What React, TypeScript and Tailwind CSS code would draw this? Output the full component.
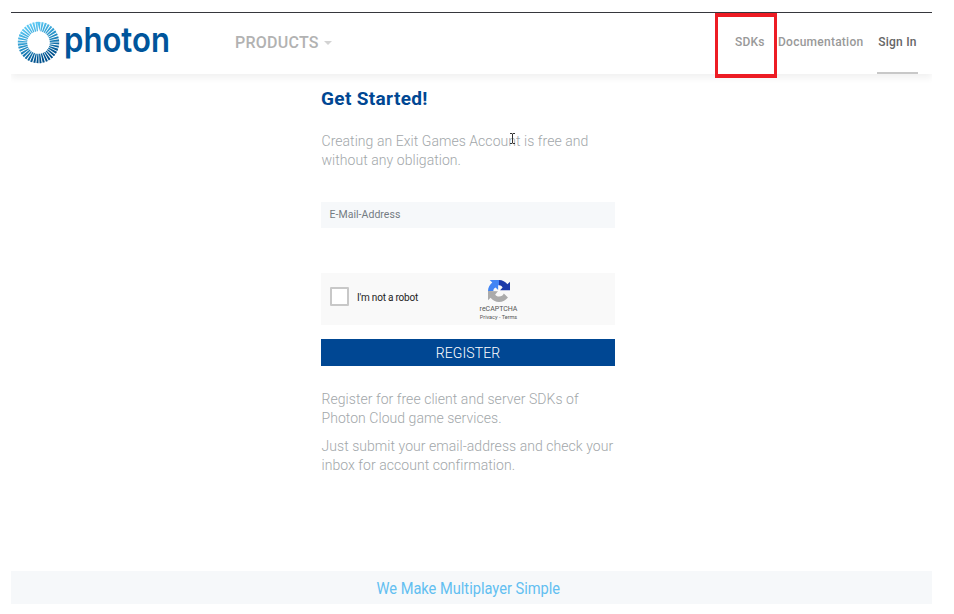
import React from 'react';

function PhotonLogo() {
  return (
    <svg width="156" height="58" viewBox="0 -8 156 58" className="block overflow-visible" aria-label="photon">
      <defs>
        <linearGradient id="ring" x1="0.2" y1="0" x2="0.65" y2="1">
          <stop offset="0" stopColor="#5cc8f3" />
          <stop offset="0.5" stopColor="#238fc6" />
          <stop offset="1" stopColor="#00508c" />
        </linearGradient>
      </defs>
      <circle cx="21.500" cy="21.500" r="16" fill="none" stroke="url(#ring)" strokeWidth="9.400" pathLength="400" strokeDasharray="6.6 3.4" />
      <text x="47" y="31.400" textLength="106" lengthAdjust="spacingAndGlyphs" fill="#00559b" fontSize="34" fontWeight="600" fontFamily="Inter, sans-serif">photon</text>
    </svg>
  );
}

function RecaptchaMark() {
  return (
    <svg width="22" height="22" viewBox="0 0 64 64" className="block">
      <path d="M64 32V5l-7.500 7.500C50.500 5 42 0 32 0v15.500c6 0 9 3 10.500 6.500L35 29.500h29z" fill="#1c3aa9" />
      <path d="M32 0H5l7.500 7.500C5 13.500 0 22 0 32h15.500c0-6 3-9 6.500-10.500l7.500 7.500V15.500H32z" fill="#4285f4" />
      <path d="M0 32v27l7.500-7.500C13.500 59 22 64 32 64c11 0 20-5 26-13l-12-12c-2 5-7 9-14 9-5 0-9-2-11-6l8-9z" fill="#ababab" />
    </svg>
  );
}

export default function App() {
  return (
    <div className="relative h-[614px] w-[954px] overflow-hidden bg-white pl-[11px] pt-3 font-['Roboto',sans-serif]">
      <div className="flex h-[592px] w-[921px] flex-col">
        <header className="flex h-[62px] shrink-0 border-t border-[#36373d] bg-white pl-[6px] pr-[14px] shadow-[0_4px_7px_rgba(0,0,0,0.06)] [clip-path:inset(0_0_-14px_0)]">
          <PhotonLogo />
          <div className="ml-[62px] flex h-[59px] items-center gap-[5px] text-base font-medium text-[#b2b2b2]">
            <span className="w-[84px] whitespace-nowrap tracking-[0.25px]">PRODUCTS</span>
            <span className="border-x-[4px] border-t-[4px] border-x-transparent border-t-[#d3d3d3]" />
          </div>
          <nav className="ml-auto flex text-[12px] font-medium leading-[58px] text-[#999]">
            <a className="mr-[13px] w-[30px] whitespace-nowrap tracking-[0.2px]">SDKs</a>
            <a className="mr-[14px] w-[85px] whitespace-nowrap tracking-[0.25px]">Documentation</a>
            <a className="h-[61px] w-[41px] whitespace-nowrap border-b-2 border-[#c8c8c8] text-center tracking-[0.2px] text-[#666]">Sign In</a>
          </nav>
        </header>

        <main className="ml-[310px] flex w-[294px] flex-col text-[14px] font-light leading-[19px] text-[#a2a7aa]">
          <h1 className="mt-[13px] whitespace-nowrap text-[19px] font-bold leading-[24px] tracking-[0.35px] text-[#004793]">Get Started!</h1>
          <p className="mt-[21px] whitespace-nowrap pl-[0.500px] tracking-[0.050px]">Creating an Exit Games Account is free and<br />without any obligation.</p>
          <div className="mt-[32px] h-[26px] bg-[#f6f8fa] pl-[8.500px] text-[10.500px] font-normal leading-[25px] tracking-[0.040px] text-[#747b82]">E-Mail-Address</div>
          <div className="mt-[45px] flex h-[52px] bg-[#f9f9f9]">
            <span className="ml-[9px] mt-[14px] size-[19px] rounded-[1px] border-2 border-[#c8c8c8] bg-white" />
            <span className="ml-2 w-[108px] whitespace-nowrap text-[10px] font-normal leading-[50px] tracking-[-0.200px] text-[#222]">I'm not a robot</span>
            <div className="flex w-[67px] flex-col items-center pt-[7px] font-normal text-[#555]">
              <RecaptchaMark />
              <span className="mt-[3px] text-[7px] leading-[9px]">reCAPTCHA</span>
              <span className="text-[5.500px] leading-[7px]">Privacy - Terms</span>
            </div>
          </div>
          <button className="mt-[14px] h-[27px] bg-[#004793] text-[14px] font-light leading-[28px] tracking-[0.100px] text-white">REGISTER</button>
          <p className="mt-[24px] whitespace-nowrap pl-[0.500px] tracking-[0.050px]">Register for free client and server SDKs of<br />Photon Cloud game services.</p>
          <p className="mt-[9px] whitespace-nowrap pl-[0.500px] tracking-[0.050px]">Just submit your email-address and check your<br />inbox for account confirmation.</p>
        </main>

        <footer className="mt-auto flex h-[33px] items-center justify-center bg-[#f6f8fa] text-[17px] font-normal text-[#62bff1]">
          <span className="mt-[3px] scale-x-[0.86] whitespace-nowrap pr-[8px]">We Make Multiplayer Simple</span>
        </footer>
      </div>

      <div className="absolute left-[715px] top-[13px] h-[65px] w-[62px] border-x-[3px] border-y-4 border-[#ed1c24]" />
      <svg className="absolute left-[509px] top-[132px]" width="7" height="13" viewBox="0 0 7 13" fill="none" stroke="#333">
        <path d="M1 1.500h2l.5.500.500-.500h2M3.500 2v9M1 11.500h2l.500-.500.500.500h2" />
      </svg>
    </div>
  );
}
